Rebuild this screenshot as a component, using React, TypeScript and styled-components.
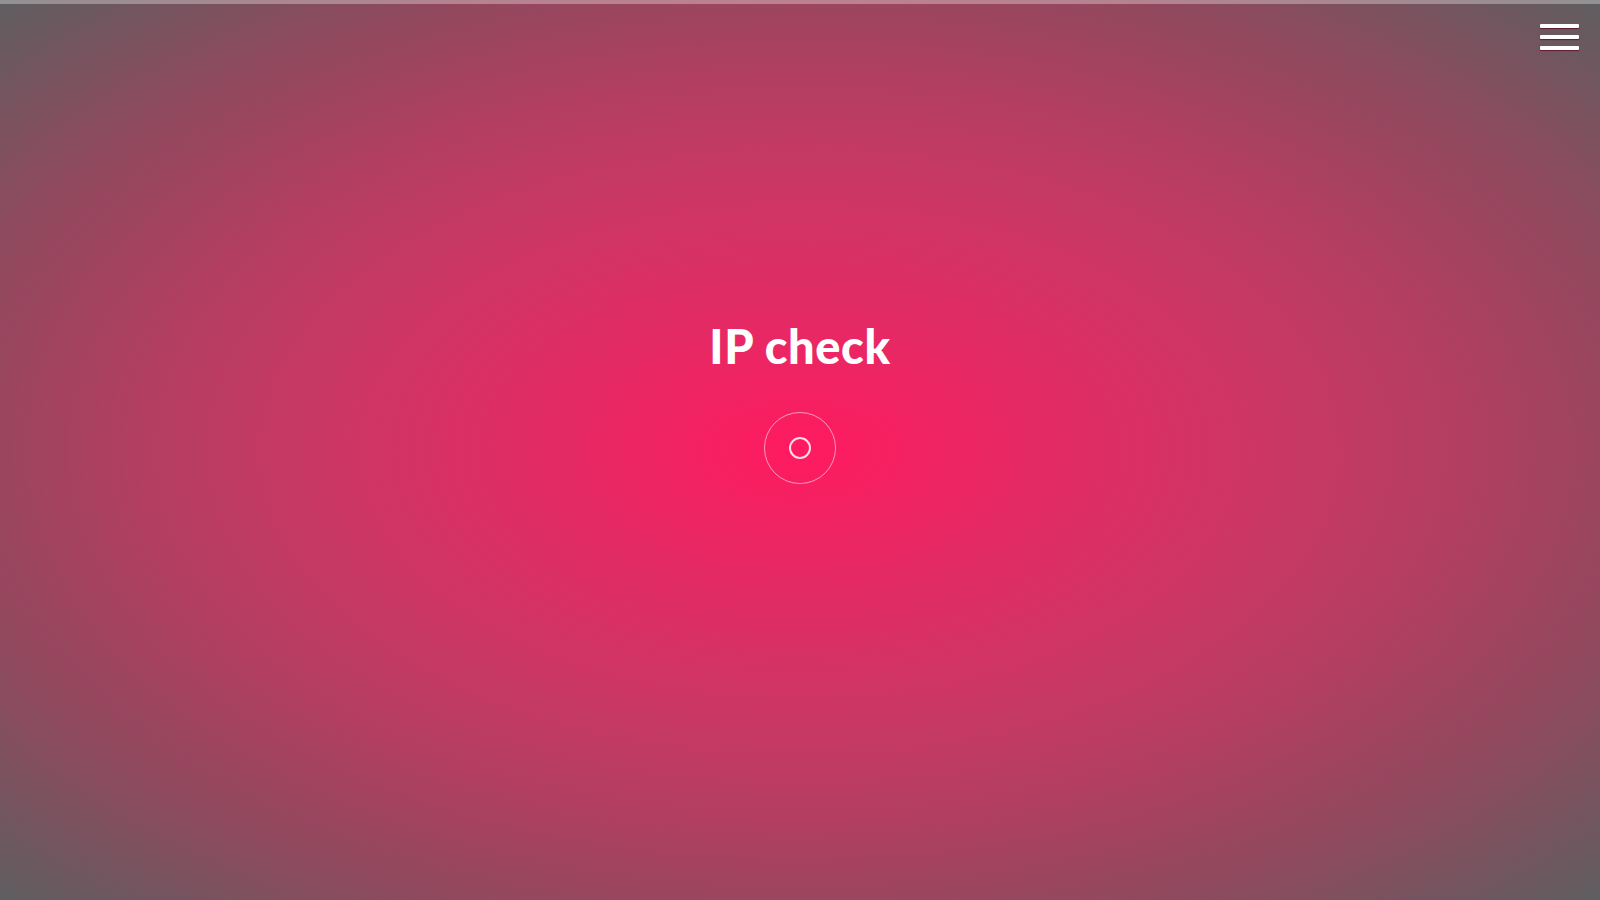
import React from 'react';
import styled, { createGlobalStyle } from 'styled-components';

const GlobalStyle = createGlobalStyle`
  html, body, #root {
    margin: 0;
    padding: 0;
    height: 100%;
  }
  body {
    font-family: 'Lato', 'Open Sans', sans-serif;
    overflow: hidden;
  }
`;

const Page = styled.div`
  position: relative;
  width: 100%;
  height: 900px;
  display: flex;
  flex-direction: column;
  background: radial-gradient(
    ellipse at 50% 50%,
    #ff1a5e 0%,
    #e82864 18%,
    #d03566 38%,
    #b33e62 58%,
    #8e4a5e 78%,
    #5e5e60 100%
  );
`;

const TopStrip = styled.div`
  height: 4px;
  background: rgba(255, 255, 255, 0.32);
  flex: none;
`;

const Main = styled.main`
  flex: 1;
  display: flex;
  flex-direction: column;
  align-items: center;
  padding-top: 314px;
`;

const Title = styled.h1`
  margin: 0;
  color: #fff;
  font-family: 'Lato', sans-serif;
  font-weight: 900;
  font-size: 47px;
  line-height: 56px;
  letter-spacing: 0.6px;
`;

const ScanButton = styled.button`
  margin-top: 38px;
  width: 72px;
  height: 72px;
  border-radius: 50%;
  border: 1px solid rgba(255, 255, 255, 0.55);
  background: transparent;
  display: flex;
  align-items: center;
  justify-content: center;
  padding: 0;
  cursor: pointer;
`;

const Dot = styled.span`
  width: 18px;
  height: 18px;
  border-radius: 50%;
  border: 2.5px solid rgba(255, 255, 255, 0.85);
`;

const MenuButton = styled.button`
  position: absolute;
  top: 24px;
  right: 21px;
  width: 39px;
  display: flex;
  flex-direction: column;
  gap: 7px;
  padding: 0;
  border: none;
  background: transparent;
  cursor: pointer;
`;

const MenuLine = styled.span`
  display: block;
  height: 4px;
  border-radius: 1px;
  background: #fff;
  box-shadow: 0 1px 1px rgba(90, 0, 30, 0.7);
`;

export default function App() {
  return (
    <>
      <GlobalStyle />
      <Page>
        <TopStrip />
        <MenuButton aria-label="Menu">
          <MenuLine />
          <MenuLine />
          <MenuLine />
        </MenuButton>
        <Main>
          <Title>IP check</Title>
          <ScanButton aria-label="Check IP">
            <Dot />
          </ScanButton>
        </Main>
      </Page>
    </>
  );
}
